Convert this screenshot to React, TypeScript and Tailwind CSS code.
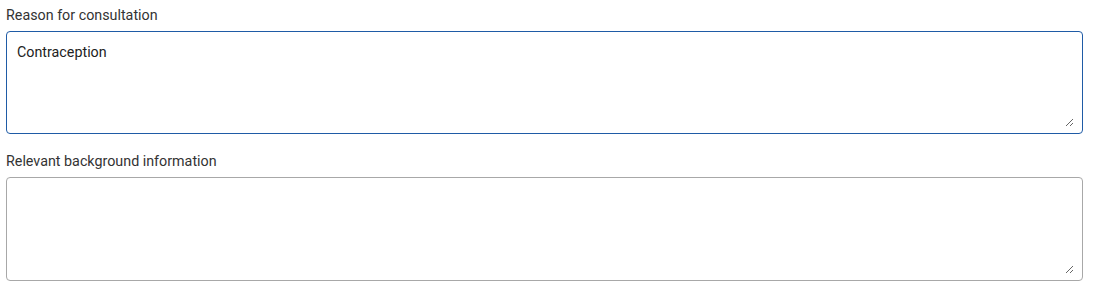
import React from "react";

export default function App() {
  return (
    <div className="w-[1098px] h-[286px] bg-white pl-[6px] pt-[5px] font-['Roboto',sans-serif] text-[14.3px] text-[#333333]">
      <div className="w-[1077px]">
        <label className="block leading-[20px] mb-[6px]">Reason for consultation</label>
        <div className="h-[103px] rounded-[4px] border border-[#1f5ba6] pl-[8px] pr-[8px] pt-[10px] pb-[6px] flex">
          <textarea
            defaultValue="Contraception"
            className="block w-full h-full border-0 px-[2px] py-0 text-[14.3px] leading-[20px] text-[#222222] outline-none resize font-['Roboto',sans-serif]"
          />
        </div>
        <label className="block leading-[20px] mt-[17px] mb-[6px]">Relevant background information</label>
        <div className="h-[104px] rounded-[4px] border border-[#a8a8a8] pl-[8px] pr-[8px] pt-[10px] pb-[6px] flex">
          <textarea
            className="block w-full h-full border-0 px-[2px] py-0 text-[14.3px] leading-[20px] text-[#222222] outline-none resize font-['Roboto',sans-serif]"
          />
        </div>
      </div>
    </div>
  );
}
